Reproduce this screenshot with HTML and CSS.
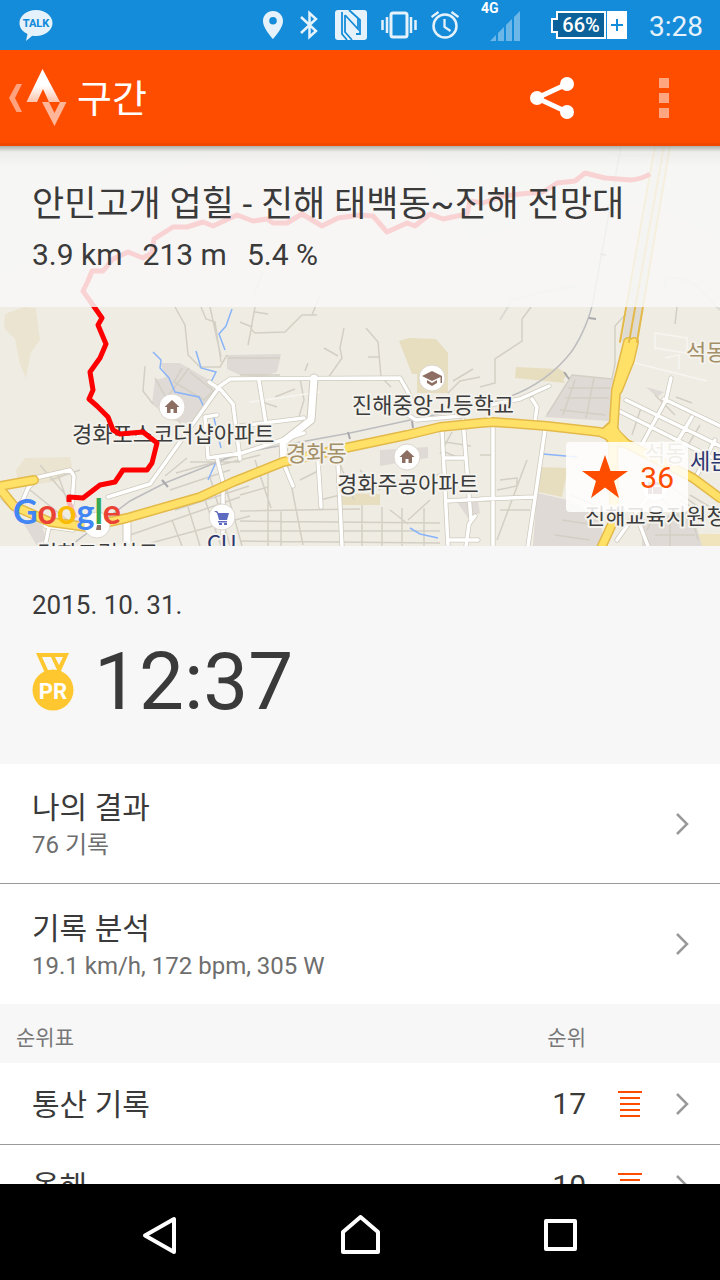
FILE: index.html
```html
<!DOCTYPE html>
<html lang="ko">
<head>
  <meta charset="UTF-8" />
  <meta name="viewport" content="width=device-width, initial-scale=1.0" />
  <title>구간</title>
  <link rel="stylesheet" href="styles.css">
</head>
<body>
  <div class="statusbar">
    <svg class="talk" width="34" height="50" viewBox="19 0 34 50">
      <path d="M36 10c9 0 16.500 5.700 16.500 13S45 36 36 36c-1.300 0-2.500-.1-3.700-.3L26 41l1.500-7C22.500 31.800 19.500 27.800 19.500 23c0-7.300 7.500-13 16.500-13z" fill="#e6f2fb"/>
      <text x="36" y="27" text-anchor="middle" font-size="11" font-weight="800" fill="#148cda">TALK</text>
    </svg>
    <svg width="22" height="50" viewBox="262 0 22 50">
      <path d="M273 11c-5.800 0-10 4.500-10 10 0 7.500 10 18 10 18s10-10.500 10-18c0-5.500-4.200-10-10-10zm0 6a3.800 3.800 0 1 1 0 7.600 3.800 3.800 0 0 1 0-7.600z" fill="#e6f2fb"/>
    </svg>
    <svg width="22" height="50" viewBox="298 0 22 50">
      <path d="M301 17l15 14-6.500 6V13l6.500 6-15 14" fill="none" stroke="#e6f2fb" stroke-width="2.500"/>
    </svg>
    <svg width="33" height="50" viewBox="334 0 33 50">
      <rect x="335" y="10" width="32" height="30" rx="3" fill="#e6f2fb"/>
      <path d="M342 12v22l5 6M345 15l13 14V18M345 15v17l7 8M349 10l11 10v14l-4 0" fill="none" stroke="#148cda" stroke-width="1.800"/>
    </svg>
    <svg width="36" height="50" viewBox="381 0 36 50">
      <rect x="391" y="13" width="16" height="24" rx="2" fill="none" stroke="#e6f2fb" stroke-width="3"/>
      <path d="M382.500 20v10M387 17v16M411 17v16M415.500 20v10" stroke="#e6f2fb" stroke-width="2.500"/>
    </svg>
    <svg width="28" height="50" viewBox="431 0 28 50">
      <circle cx="445" cy="26" r="11.500" fill="none" stroke="#e6f2fb" stroke-width="2.500"/>
      <path d="M444.500 19v8l6 4M431.500 17l7-5M458.500 17l-7-5" fill="none" stroke="#e6f2fb" stroke-width="2.300"/>
    </svg>
    <svg width="64" height="50" viewBox="473 0 64 50">
      <text x="481" y="13" font-size="14" font-weight="700" fill="#fff">4G</text>
      <path d="M490 41l6-6v6zM498 33l6-6v14h-6zM506 25l6-6v22h-6zM514 17l6-6v30h-6z" fill="#6cb6e8"/>
    </svg>
    <svg width="76" height="50" viewBox="551 0 76 50">
      <path d="M557 12h48v26h-48v-6h-5V19h5z" fill="#0b6199" stroke="#fff" stroke-width="2"/>
      <rect x="607" y="11" width="20" height="28" fill="#fff"/>
      <path d="M611 25h12M617 19v12" stroke="#148cda" stroke-width="2"/>
      <text x="581" y="32" text-anchor="middle" font-size="20" font-weight="500" fill="#fff">66%</text>
    </svg>
    <time class="clock">3:28</time>
  </div>

  <header>
    <button class="up" aria-label="뒤로">
      <svg width="62" height="64" viewBox="8 66 62 64">
        <defs>
          <linearGradient id="peak" x1="0" y1="0" x2="0" y2="1">
            <stop offset=".5" stop-color="#fff"/>
            <stop offset="1" stop-color="#ffc3ab"/>
          </linearGradient>
        </defs>
        <path d="M16.500 84H22l-7 14 7 14h-5.500L9 98z" fill="#ffa27d"/>
        <path d="M42 102h7l5.500 11 5.500-11h6.500L54.500 126z" fill="#ffb597"/>
        <path d="M42.500 69L60 102H49l-6-13-6 13H26.500z" fill="url(#peak)"/>
      </svg>
    </button>
    <h1>구간</h1>
    <button class="share" aria-label="공유">
      <svg width="48" height="48" viewBox="528 74 48 48">
        <path d="M567 84l-30 14 30 14" fill="none" stroke="#fff" stroke-width="5"/>
        <circle cx="537" cy="98" r="7" fill="#fff"/>
        <circle cx="567" cy="84" r="7" fill="#fff"/>
        <circle cx="567" cy="112" r="7" fill="#fff"/>
      </svg>
    </button>
    <button class="more" aria-label="더보기"><i></i><i></i><i></i></button>
  </header>

  <main>
    <section class="map">
      <svg class="tiles" viewBox="0 146 720 400" preserveAspectRatio="xMidYMid slice">
        <defs>
          <path id="streets" d="M35 478l35-8 4 6-2 28M108 497l42-13 70-98 10-7 170-1 8 14 4 10M209 382l12 8 12 14 7 55M205 417l12-2M205 417l3 41 34-5 62-20M259 381l7 43M240 426l64-8M217 458l6 24v60M283 462l10 24M318 460l3 47M338 464l4 82M400 410l16 10 45-4M442 430l6 116M463 420l8 100M444 458h20M446 501l40-2M448 540h30M493 423v123M480 499l54-2M545 430l-17 116M532 399l5 8-2 14M480 407l40-8 29-13M466 546l3-22 6-8M671 378l-5 22-27 50M626 400l94 46M619 411l100 50M664 399l56 27M692 417l-15 25M715 440l-18 35M617 540l34-48M640 525l8 21M0 495l15 15M22 502l6-14 7-7M50 522l-5 24M45 526l28 4"/>
          <path id="avenue" d="M314 378l-3 42-28 22 1 20M127 522v24"/>
          <path id="mainRoad" d="M0 486l34-6M-4 484l18 22 36 16 37 5 40-9 73-21 33-15 50-20 67-15 57-12 33-8 40-4 13-1 54 4 53 6 23 10 70 36 27 20"/>
          <path id="crossRoad" d="M628 342l-12 48-3 46 1 84-13 28M634 342l-4 18-12 30"/>
        </defs>
        <rect y="146" width="720" height="400" fill="#efece4"/>

        <!-- hills, parks, school grounds -->
        <g fill="#ebe4d0">
          <path d="M24 307l12 1 4 32-9 12-5 26-6-14-5-25-11-11 1-14z"/>
          <path d="M16 470l9-12 45-1 2 10-14 14-40 6z"/>
          <path d="M0 146h230l-90 40-60 50-80 40z" fill="#e9ecdc"/>
          <path d="M420 146h300v95l-70-40-90 10-90 30z" fill="#e9ecdc"/>
        </g>
        <g fill="#e7ddbf">
          <path d="M399 341l10-3 27 1 12 14v40h-31v-19h-5z"/>
          <path d="M516 367l42 2 7 14-50-5zM556 367l12 7-8 9z"/>
          <path d="M342 493l38 1v11h-38zM541 467l27 1-6 29-24-5z"/>
          <path d="M690 534h30v12h-34z" fill="#efe4bc"/>
        </g>
        <g fill="#dfdad5">
          <path d="M155 380l12-3 20 10 28 5-24 32-20-4-19-16z"/>
          <path d="M160 363l20 0 34 20-4 22-24-10-16-10z"/>
          <path d="M227 355l54-1-4 18-15 5-22-2-13-6z"/>
          <path d="M573 375l41 4-5 42-64-4z"/>
          <path d="M537 493l35 8 30 20v25h-69zM380 450l48-3v11l-48 8z"/>
          <path d="M24 524l16-4 6 18-9 8zM457 502l20-5 3 16-12 5zM646 387l18 5-7 5z"/>
          <path d="M642 520l50-10 10 36h-60z"/>
        </g>

        <!-- footpaths and small streets -->
        <g fill="none" stroke="#d3cfc4" stroke-width="1.500">
          <path d="M175 307l10 18 3 30 12 12 20 0 7-12M201 307l5 12 9 3 6 40M210 307l11 50M255 307l-4 22 4 4 30-1 17-17 15 0M255 312l13 2M240 322l12 5M248 345l4-20M344 328l-4 20 2 10-14 20M324 348l14 8M366 328l12 14 3 35 10 10M368 357h12"/>
          <path d="M255 292l8-20M312 315l8-20M145 366l-2 25 10 13M155 378l28 50M182 368l-8 14 30 18 12-12M165 400l24-32M190 372l25 20M228 358h52M240 375h40M300 378l4 22-6 20M275 397l20-8M262 402l15 5M305 371l3-8"/>
          <path d="M531 307l-9 12v22l-27 18v24l-15 4M626 314l-11 12v38l-3 15-40-4-25 40M677 307l-2 17"/>
          <path d="M568 388h42M565 398h44M560 410l46 5M575 380l-12 35M594 378l-8 40"/>
          <path d="M40 465l30 35M50 480l30-10M58 475l18 50M30 490l50 40"/>
          <path d="M210 477l20 69M222 473l20 73M176 473l64-18M170 490l60-20M188 507l12 39M205 500l16 46M172 520l10 26M130 535l110-38M140 546l110-30M165 476l22-18M190 462h50M175 510l74-24M220 465l40-10"/>
          <path d="M255 460l16 48M268 468v78M281 510v36M287 463l16 82M240 495l28-8M240 511l120-2M240 521l200 2M240 531h200M240 541l200 2M362 505v41M382 507v39M402 508v38M424 508v38M340 464l14 36M360 470l20 20M300 480l20-10M320 500l20-5M420 480l20-6M430 500l-22 20M390 510l18 14"/>
          <path d="M452 432l-12 22M445 452l14 6M445 442l26 4M453 381l20-12M448 393l12-12 20-4M480 455h14M500 480l17-2v8l-20 4M497 540l30-80M500 510h30"/>
          <path d="M570 495l30 12M562 520l40 6M555 535l35 5M647 530l10-20M670 520v26M690 510l8 30M655 535h40M650 487l30 30M665 482l40 30M680 500l40 25M690 495l30 18"/>
          <path d="M642 405l-10 30M676 397l16 6M655 395l20 20M700 425l-15 25"/>
        </g>
        <g fill="none" stroke="#f7f5f0" stroke-width="1.500">
          <path d="M655 333l32 5v15l-32-5zM637 345l-2 18 72 18M665 358l14-3v14M250 402l70-10"/>
        </g>
        <path d="M665 290c-5-15 15-15 30-5l25 25M610 153c20 6 40 2 60 0M500 320l12-20 30-8 34-6" fill="none" stroke="#dcdad5" stroke-width="2"/>

        <!-- streams -->
        <path d="M153 352l8 8-1 8 9 10 6 14 24 5 5 10M232 309l-6 17-7 8 6 16M196 351l5 17 15 4-5 10M214 418l7 30M216 462l-8 18M543 454l34 3M410 528l10 6 18 4" fill="none" stroke="#8ab4f8" stroke-width="1.500"/>

        <!-- railway -->
        <path d="M70 546l60-45 35-18 75-30 110-20 130-28c40-8 70-25 92-54 12-18 20-40 22-55l27-150" fill="none" stroke="#bdbdbf" stroke-width="1.500"/>
        <path d="M162 480l6 7M348 432l2 7M412 421l1 7M564 372l5 7M589 318l7 1M600 254l6 1" stroke="#a9a9ad" stroke-width="2"/>

        <!-- roads: casing first, then the fill -->
        <g fill="none" stroke-linejoin="round" stroke-linecap="round">
          <use href="#streets" stroke="#cfcabd" stroke-width="5"/>
          <use href="#avenue" stroke="#cfcabd" stroke-width="9"/>
          <use href="#streets" stroke="#fff" stroke-width="3.500"/>
          <use href="#avenue" stroke="#fff" stroke-width="7"/>
          <path d="M629 342l35-196" stroke="#dfdbd2" stroke-width="15" stroke-linecap="butt"/>
          <use href="#mainRoad" stroke="#e3b949" stroke-width="10"/>
          <use href="#crossRoad" stroke="#e3b949" stroke-width="10"/>
          <path d="M600 431l13-12 6 12 12 12-18 6z" fill="#ffe168" stroke="#e3b949" stroke-width="2"/>
          <use href="#mainRoad" stroke="#ffe168" stroke-width="7"/>
          <use href="#crossRoad" stroke="#ffe168" stroke-width="7"/>
          <path d="M601 431l12-10 6 10 10 11-16 6z" fill="#ffe168"/>
          <path d="M620 342l35-196M629 342l35-196M637 342l33-196" stroke="#e3b949" stroke-width="2"/>
        </g>

        <!-- places -->
        <g fill="#fff" stroke="#dcd8cf">
          <circle cx="172" cy="407" r="13"/>
          <circle cx="432" cy="378" r="13"/>
          <circle cx="407" cy="457" r="13"/>
          <circle cx="222" cy="517" r="13"/>
          <circle cx="97" cy="525" r="13"/>
          <circle cx="655" cy="488" r="13"/>
        </g>
        <g fill="#8d6e63">
          <path d="M172 400l7.500 7H177v6h-3.500v-4h-3v4H167v-6h-2.500z"/>
          <path d="M407 450l7.500 7H412v6h-3.500v-4h-3v4H402v-6h-2.500z"/>
          <path d="M432 371l10 5v7h-1.500v-6l-8.500 4-10-5zM427 380l5 3 5-3v3l-5 3-5-3z"/>
          <path d="M97 525h4v5h-5zM648 482h4v12h-4zM653 482h9v3h-9zM653 487h9v7h-9z"/>
        </g>
        <path d="M214 511h3l1.500 2H229l-2 7h-8l-2-7zM218 521h9v1.500h-9zM219 523h3v2h-3zM224 523h3v2h-3z" fill="#5c6bc0"/>

        <g class="label">
          <text x="72" y="442">경화포스코더샵아파트</text>
          <text x="352" y="413">진해중앙고등학교</text>
          <text x="337" y="492">경화주공아파트</text>
          <text x="585" y="524">진해교육지원청</text>
          <text x="37" y="561">경화그린하트</text>
          <text x="207" y="551" class="shop">CU</text>
          <text x="690" y="469" class="shop">세븐일레븐</text>
          <text x="286" y="461" class="area">경화동</text>
          <text x="645" y="461" class="area">석동</text>
          <text x="686" y="360" class="area">석동</text>
        </g>

        <!-- ridden segment -->
        <path d="M69 502l3 8 3 8" fill="none" stroke="#f9b4b4" stroke-width="5"/>
        <path class="track" d="M650 174q-8 5-19 6l-26-2-20-5-10 8-18 2-14 9-23 2-17 2-20 7-13-2-3 13-24 5-13-5-15 12-8-3-20 9-14-16-13-1-22 3-16 8-20-12-15 9h-14l-6-4-14 2-16-6-24 11-10-4-16 5h-14l-19 12-2 14-9 5-15-6-15 7-10 12H92l-4 10-5 10 12 17 7 10-4 7 8 19-6 14-10 14 3 18-4 9 8 7 11 11 5 13 7 4 23-2 14 11-5 20-5 7h-24l-8 12-15 3-17 13-14-1v5"/>
        <text x="13" y="524" class="google"><tspan fill="#4285f4">G</tspan><tspan fill="#ea4335">o</tspan><tspan fill="#fbbc05">o</tspan><tspan fill="#4285f4">g</tspan><tspan fill="#34a853">l</tspan><tspan fill="#ea4335">e</tspan></text>
      </svg>

      <div class="segment-info">
        <h2>안민고개 업힐 - 진해 태백동~진해 전망대</h2>
        <p><span>3.9 km</span><span>213 m</span><span>5.4 %</span></p>
      </div>

      <button class="star">
        <svg width="46" height="44" viewBox="0 0 46 44"><path d="M23 0l5.500 16H46L32 26l5 17-14-10.500L9 43l5-17L0 16h17.500z" fill="#ff4d00"/></svg>
        36
      </button>
    </section>

    <section class="result">
      <p class="date">2015. 10. 31.</p>
      <div class="best">
        <svg width="42" height="58" viewBox="0 0 42 58">
          <path d="M4 0h33L28 20H13z" fill="#ffc72f"/>
          <path d="M10 4h9l6 13h-9zM23 4h8l-4 8z" fill="#f7f7f7"/>
          <circle cx="21" cy="37" r="20.500" fill="#ffc72f"/>
          <text x="21" y="46" text-anchor="middle" font-size="22" font-weight="700" fill="#fff">PR</text>
        </svg>
        <strong>12:37</strong>
      </div>
    </section>

    <nav class="details">
      <a href="#results">
        <span class="text">나의 결과<small>76 기록</small></span>
        <svg class="arrow" viewBox="0 0 12 22"><path d="M1 1l10 10L1 21"/></svg>
      </a>
      <a href="#analysis">
        <span class="text">기록 분석<small>19.1 km/h, 172 bpm, 305 W</small></span>
        <svg class="arrow" viewBox="0 0 12 22"><path d="M1 1l10 10L1 21"/></svg>
      </a>
    </nav>

    <section class="leaderboard">
      <div class="board-head"><h3>순위표</h3><span>순위</span></div>
      <a href="#overall">
        <span class="text">통산 기록</span>
        <span class="rank">17</span>
        <svg class="list" viewBox="0 0 24 26"><path d="M0 1h24M2 7h20M2 13h20M2 19h20M2 25h20"/></svg>
        <svg class="arrow" viewBox="0 0 12 22"><path d="M1 1l10 10L1 21"/></svg>
      </a>
      <a href="#year">
        <span class="text">올해</span>
        <span class="rank">10</span>
        <svg class="list" viewBox="0 0 24 26"><path d="M0 1h24M2 7h20M2 13h20M2 19h20M2 25h20"/></svg>
        <svg class="arrow" viewBox="0 0 12 22"><path d="M1 1l10 10L1 21"/></svg>
      </a>
    </section>
  </main>

  <footer>
    <button aria-label="이전"><svg width="40" height="40" viewBox="140 1215 40 40"><path d="M145 1235.500L174 1219v33z"/></svg></button>
    <button aria-label="홈"><svg width="40" height="40" viewBox="340 1215 40 40"><path d="M343 1252v-20l17.500-15 17.500 15v20z"/></svg></button>
    <button aria-label="최근 앱"><svg width="40" height="40" viewBox="540 1215 40 40"><path d="M546 1221h29v28h-29z"/></svg></button>
  </footer>
</body>
</html>
```
FILE: styles.css
```css
* {
  box-sizing: border-box;
}

body {
  margin: 0;
  height: 100vh;
  display: flex;
  flex-direction: column;
  overflow: hidden;
  font-family: Roboto, "Noto Sans CJK KR", sans-serif;
  color: #3a3a3a;
  background-color: #fff;
}

h1, h2, h3, p {
  margin: 0;
  font-weight: 400;
}

button {
  font: inherit;
  border: none;
  padding: 0;
  background: none;
  cursor: pointer;
}

a {
  color: inherit;
  text-decoration: none;
}

svg {
  display: block;
  flex: none;
}

.statusbar {
  height: 50px;
  flex: none;
  display: flex;
  align-items: center;
  gap: 14px;
  padding: 0 17px 0 19px;
  background-color: #148cda;
}

.statusbar .talk {
  margin-right: auto;
}

.clock {
  margin-left: 8px;
  padding-top: 2px;
  font-size: 28px;
  color: #e6f2fb;
}

header {
  height: 96px;
  flex: none;
  display: flex;
  align-items: center;
  padding: 3px 32px 0 8px;
  background-color: #ff4d00;
  border-bottom: 3px solid #f04800;
}

header h1 {
  margin-left: 7px;
  padding-top: 2px;
  font-size: 38px;
  line-height: 48px;
  color: #fff;
}

.share {
  margin-left: auto;
}

.more {
  width: 48px;
  margin-left: 64px;
  display: flex;
  flex-direction: column;
  align-items: center;
  gap: 5px;
}

.more i {
  width: 10px;
  height: 10px;
  background-color: #ffa680;
}

main {
  flex: 1;
  min-height: 0;
  overflow: hidden;
}

.map {
  position: relative;
  height: 400px;
}

.tiles {
  width: 100%;
  height: 100%;
}

.track {
  fill: none;
  stroke: #f00;
  stroke-width: 5;
  stroke-linejoin: round;
}

.label text {
  font-family: "Noto Sans CJK KR", sans-serif;
  font-size: 22px;
  fill: #3c3c3c;
  stroke: #f4f2ec;
  stroke-width: 4px;
  stroke-linejoin: round;
  paint-order: stroke;
}

.label .area {
  fill: #a38f68;
}

.label .shop {
  fill: #2c3670;
}

.google {
  font-family: Lato, sans-serif;
  font-size: 34px;
  font-weight: 700;
}

.segment-info {
  position: absolute;
  top: 0;
  left: 0;
  right: 0;
  height: 161px;
  padding: 35px 32px 0;
  background: linear-gradient(rgba(130, 130, 125, 0.6), rgba(200, 200, 195, 0.2) 6px, transparent 20px), rgba(248, 248, 248, 0.85);
}

.segment-info h2 {
  font-size: 35px;
  line-height: 48px;
  white-space: nowrap;
}

.segment-info p {
  display: flex;
  gap: 20px;
  margin-top: 8px;
  font-size: 30px;
  line-height: 36px;
}

.star {
  position: absolute;
  right: 32px;
  bottom: 34px;
  height: 70px;
  padding: 0 14px 0 16px;
  display: flex;
  align-items: center;
  gap: 12px;
  font-size: 30px;
  color: #ff4d00;
  background-color: rgba(255, 255, 255, 0.85);
  border-radius: 4px;
}

.result {
  height: 218px;
  padding: 42px 32px 0;
  background-color: #f7f7f7;
}

.date {
  font-size: 26px;
  line-height: 34px;
}

.best {
  display: flex;
  align-items: center;
  gap: 20px;
  margin-top: 12px;
}

.best strong {
  font-size: 80px;
  line-height: 96px;
  font-weight: 400;
}

.details a,
.leaderboard a {
  display: flex;
  align-items: center;
  padding: 0 32px;
  font-size: 30px;
  line-height: 40px;
  background-color: #fff;
}

.details a {
  height: 120px;
}

.leaderboard a {
  height: 82px;
}

.details a:first-child,
.leaderboard a {
  border-bottom: 1px solid #999;
}

.text {
  flex: 1;
  padding-top: 3px;
}

.text small {
  display: block;
  font-size: 24px;
  line-height: 34px;
  color: #6e6e6e;
}

.board-head {
  height: 59px;
  padding: 4px 134px 0 16px;
  display: flex;
  align-items: center;
  justify-content: space-between;
  font-size: 21px;
  color: #777;
  background-color: #f7f7f7;
}

.board-head h3 {
  font-size: 21px;
}

.arrow {
  width: 12px;
  height: 22px;
  overflow: visible;
  fill: none;
  stroke: #999;
  stroke-width: 2.5;
}

.list {
  width: 24px;
  height: 26px;
  margin: 0 34px 0 32px;
  stroke: #ff4d00;
  stroke-width: 2;
}

footer {
  height: 96px;
  flex: none;
  display: flex;
  align-items: center;
  padding: 6px 60px 0;
  background-color: #000;
}

footer button {
  flex: 1;
  display: flex;
  justify-content: center;
}

footer path {
  fill: none;
  stroke: #fff;
  stroke-width: 4;
  stroke-linejoin: round;
}
```
